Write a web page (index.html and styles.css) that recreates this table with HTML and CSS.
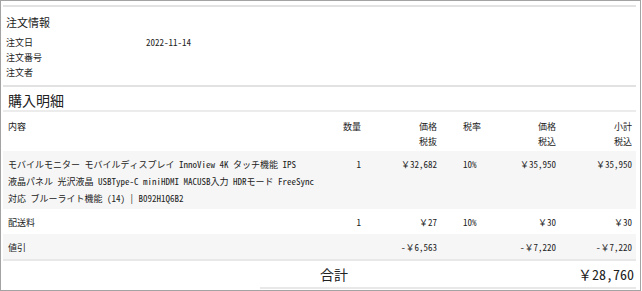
FILE: index.html
```html
<!DOCTYPE html>
<html lang="ja">
<head>
<meta charset="utf-8">
<link rel="stylesheet" href="styles.css">
</head>
<body>
<div class="page">
  <section class="info">
    <h2 class="info-title">注文情報</h2>
    <div class="info-row"><span class="info-label">注文日</span><span>2022-11-14</span></div>
    <div class="info-row"><span class="info-label">注文番号</span><span></span></div>
    <div class="info-row"><span class="info-label">注文者</span><span></span></div>
  </section>
  <section class="detail">
    <h2 class="detail-title">購入明細</h2>
    <div class="row head">
      <div>内容</div>
      <div class="r">数量</div>
      <div class="r">価格<br>税抜</div>
      <div class="rate">税率</div>
      <div class="r">価格<br>税込</div>
      <div class="r">小計<br>税込</div>
    </div>
    <div class="row shade product">
      <div class="name">モバイルモニター モバイルディスプレイ InnoView 4K タッチ機能 IPS 液晶パネル 光沢液晶 USBType-C miniHDMI MACUSB入力 HDRモード FreeSync 対応 ブルーライト機能 (14) | B092H1Q6B2</div>
      <div class="r">1</div>
      <div class="r">￥32,682</div>
      <div class="rate">10%</div>
      <div class="r">￥35,950</div>
      <div class="r">￥35,950</div>
    </div>
    <div class="row">
      <div>配送料</div>
      <div class="r">1</div>
      <div class="r">￥27</div>
      <div class="rate">10%</div>
      <div class="r">￥30</div>
      <div class="r">￥30</div>
    </div>
    <div class="row shade">
      <div>値引</div>
      <div class="r"></div>
      <div class="r">-￥6,563</div>
      <div class="rate"></div>
      <div class="r">-￥7,220</div>
      <div class="r">-￥7,220</div>
    </div>
  </section>
  <div class="total">
    <span class="total-label">合計</span>
    <span class="total-value">￥28,760</span>
  </div>
</div>
</body>
</html>
```
FILE: styles.css
```css
* { box-sizing: border-box; }
html, body { margin: 0; padding: 0; background: #fff; }
body {
  font-family: "Noto Sans Mono CJK JP", "Noto Sans CJK JP", "DejaVu Sans Mono", monospace;
  color: #222;
}
.page {
  width: 641px;
  height: 291px;
  border: 1px solid #a3a3a3;
  padding: 4px 4px 0 2px;
  overflow: hidden;
  background: #fff;
}
h2 { margin: 0; font-weight: normal; }

.info {
  border-top: 2px solid #e2e2e2;
  padding: 7px 0 5px 3px;
}
.info-title {
  font-size: 11px;
  line-height: 16px;
  margin-bottom: 5px;
}
.info-row {
  display: grid;
  grid-template-columns: 140px 1fr;
  font-size: 9px;
  line-height: 15px;
  height: 15px;
}

.detail {
  border-top: 2px solid #e2e2e2;
  border-bottom: 2px solid #e8e8e8;
}
.detail-title {
  font-size: 14px;
  line-height: 20px;
  padding: 3px 0 0 5px;
  border-bottom: 2px solid #ececec;
}
.row {
  display: grid;
  grid-template-columns: 322px 31px 76px 53px 66px 76px;
  padding: 5px 4px 3px 5px;
  font-size: 9px;
  line-height: 17px;
}
.row.head {
  padding: 7px 4px 2px 5px;
  line-height: 15px;
}
.row.product { padding-bottom: 2px; }
.shade { background: #f6f6f6; }
.r { text-align: right; }
.rate { padding-left: 26px; }
.name { word-break: keep-all; overflow-wrap: anywhere; }

.total {
  margin-left: 257px;
  display: flex;
  justify-content: space-between;
  align-items: center;
  padding: 3px 2px 3px 60px;
  border-bottom: 2px solid #e8e8e8;
  font-size: 14px;
  line-height: 20px;
}
```
